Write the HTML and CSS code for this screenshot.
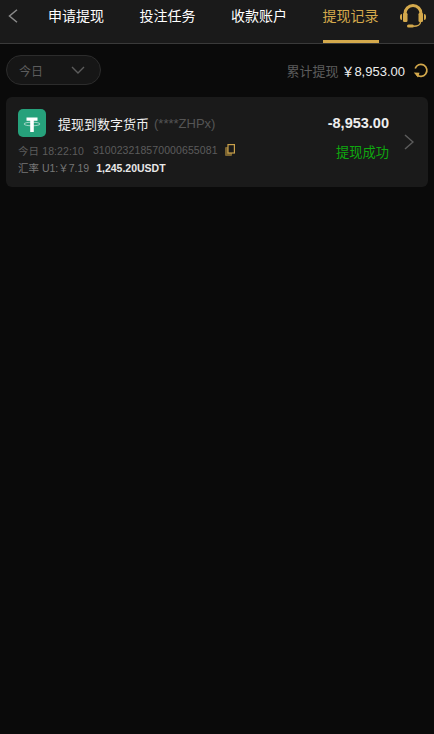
FILE: index.html
```html
<!DOCTYPE html>
<html lang="zh-CN">
<head>
  <meta charset="UTF-8">
  <meta name="viewport" content="width=device-width, initial-scale=1.0">
  <title>提现记录</title>
  <link rel="stylesheet" href="styles.css">
</head>
<body>
  <header class="topbar">
    <svg class="back" width="10" height="14" viewBox="0 0 10 14"><path d="M9 .7 1.500 7 9 13.300" fill="none" stroke="#8a8a8a" stroke-width="1.500"/></svg>
    <nav class="tabs">
      <span class="tab">申请提现</span>
      <span class="tab">投注任务</span>
      <span class="tab">收款账户</span>
      <span class="tab active">提现记录</span>
    </nav>
    <svg class="support" width="26" height="24" viewBox="0 0 26 24">
      <path d="M5 12V9.500a8 8 0 0 1 16 0V12" fill="none" stroke="#d4a94c" stroke-width="3"/>
      <path d="M0 12a2 2 0 0 1 2-2v6a2 2 0 0 1-2-2zM26 12a2 2 0 0 0-2-2v6a2 2 0 0 0 2-2z" fill="#d4a94c"/>
      <rect x="3" y="9" width="4.500" height="9" rx="1.200" fill="#d4a94c"/>
      <rect x="18.500" y="9" width="4.500" height="9" rx="1.200" fill="#d4a94c"/>
      <path d="M20.500 18c0 2.500-3 4.200-7 4.200" fill="none" stroke="#d4a94c" stroke-width="1.400"/>
      <rect x="7" y="20.500" width="7" height="3" rx="1.500" fill="#d4a94c"/>
    </svg>
  </header>

  <section class="filters">
    <div class="select">
      <span>今日</span>
      <svg width="14" height="8" viewBox="0 0 14 8"><path d="M1 1l6 6 6-6" fill="none" stroke="#5c5c5c" stroke-width="1.400"/></svg>
    </div>
    <div class="total">
      <span class="total-label">累计提现</span>
      <span class="total-value">￥8,953.00</span>
      <svg width="16" height="16" viewBox="0 0 16 16"><path d="M2.200 6.500A6 6 0 1 1 3.500 12.500" fill="none" stroke="#d4a94c" stroke-width="1.700"/><path d="M.8 10.500 6.500 10.800 5 15.500z" fill="#d4a94c"/></svg>
    </div>
  </section>

  <article class="card">
    <div class="card-main">
      <div class="title-row">
        <svg class="coin" width="28" height="28" viewBox="0 0 28 28">
          <rect width="28" height="28" rx="5" fill="#26a17b"/>
          <path d="M8.500 8.500h11v3.200h-3.700V23h-3.600V11.700H8.500z" fill="#fff"/>
          <ellipse cx="14" cy="15" rx="8" ry="1.800" fill="none" stroke="#fff" stroke-opacity=".7" stroke-width=".8"/>
        </svg>
        <span class="title">提现到数字货币</span>
        <span class="account">(****ZHPx)</span>
      </div>
      <div class="meta">
        <span>今日 18:22:10</span>
        <span class="order">310023218570000655081</span>
        <svg width="10" height="12" viewBox="0 0 10 12"><rect x="0" y="3" width="7" height="9" rx="1" fill="#7a6330"/><rect x="3" y=".6" width="6.400" height="8.400" fill="#1a1a1a" stroke="#c9a04a" stroke-width="1.200"/></svg>
      </div>
      <div class="rate">
        <span>汇率 U1:￥7.19</span>
        <span class="usdt">1,245.20USDT</span>
      </div>
    </div>
    <div class="card-side">
      <span class="amount">-8,953.00</span>
      <span class="status">提现成功</span>
    </div>
    <svg class="chevron" width="10" height="16" viewBox="0 0 10 16"><path d="M1 1 9 8l-8 7" fill="none" stroke="#5c5c5c" stroke-width="1.500"/></svg>
  </article>
</body>
</html>
```

FILE: styles.css
```css
* {
  box-sizing: border-box;
}

body {
  margin: 0;
  min-height: 734px;
  background-color: #0a0a0a;
  color: #fff;
  font-family: "Liberation Sans", "Noto Sans CJK SC", sans-serif;
  overflow: hidden;
}

.topbar {
  display: flex;
  align-items: flex-start;
  height: 44px;
  padding: 0 8px;
  background: #1a1a1a;
  border-bottom: 1px solid #3a3a3a;
}

.back {
  flex: none;
  margin-top: 9px;
}

.tabs {
  display: flex;
  flex: 1;
  gap: 35.5px;
  margin-left: 30px;
}

.tab {
  display: flex;
  align-items: center;
  height: 43px;
  padding-bottom: 10px;
  font-size: 14px;
  white-space: nowrap;
  border-bottom: 3px solid transparent;
}

.tab.active {
  color: #d4a94c;
  border-bottom-color: #d4a94c;
}

.support {
  flex: none;
  margin-top: 4px;
}

.filters {
  display: flex;
  align-items: center;
  justify-content: space-between;
  padding: 11px 5px 12px 6px;
}

.select {
  display: flex;
  align-items: center;
  justify-content: space-between;
  width: 95px;
  height: 30px;
  padding: 0 15px 0 12px;
  font-size: 12px;
  color: #5c5c5c;
  background: #161616;
  border: 1px solid #2c2c2c;
  border-radius: 15px;
}

.total {
  display: flex;
  align-items: center;
  gap: 3px;
  font-size: 13px;
}

.total-label {
  color: #5c5c5c;
}

.total-value {
  margin-right: 5px;
  color: #eee;
}

.card {
  display: flex;
  align-items: flex-start;
  height: 90px;
  margin: 0 6px;
  padding: 12px 14px 12px 12px;
  background: #1a1a1a;
  border-radius: 6px;
}

.card-main {
  flex: 1;
}

.title-row {
  display: flex;
  align-items: center;
  height: 28px;
  font-size: 13px;
}

.coin {
  margin-right: 12px;
}

.title {
  color: #f0f0f0;
}

.account {
  margin-left: 5px;
  color: #555;
}

.meta {
  display: flex;
  align-items: center;
  height: 12px;
  margin-top: 7px;
  font-size: 10.5px;
  letter-spacing: 0.1px;
  color: #5c5c5c;
}

.order {
  margin: 0 7px 0 9px;
}

.rate {
  height: 12px;
  margin-top: 6px;
  font-size: 10.5px;
  line-height: 12px;
  color: #777;
}

.usdt {
  margin-left: 4px;
  font-weight: bold;
  color: #e8e8e8;
}

.card-side {
  display: flex;
  flex-direction: column;
  align-items: flex-end;
  gap: 14px;
  margin-top: 6px;
  margin-right: 15px;
}

.amount {
  font-size: 14.5px;
  line-height: 16px;
  font-weight: bold;
  color: #eee;
}

.status {
  font-size: 13.25px;
  line-height: 15px;
  color: #0fa80f;
}

.chevron {
  align-self: center;
}
```
